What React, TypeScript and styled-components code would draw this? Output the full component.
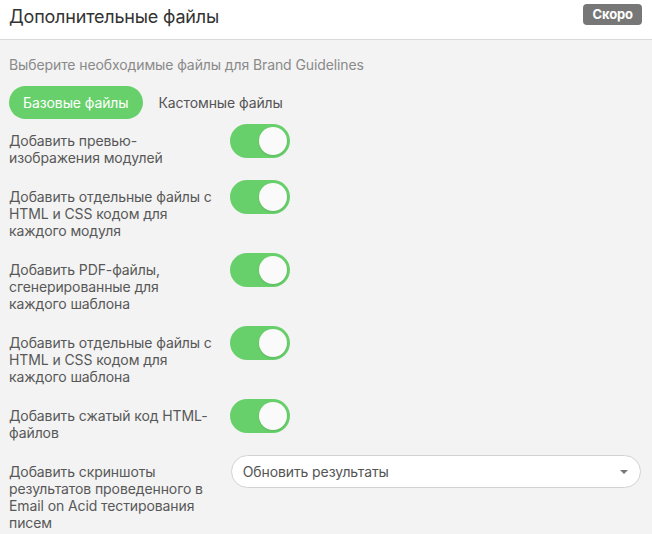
import styled, { createGlobalStyle } from "styled-components";
import { useState } from "react";

const GlobalStyle = createGlobalStyle`
  html, body {
    margin: 0;
    padding: 0;
    background: #f3f3f3;
  }
  * { box-sizing: border-box; }
`;

const options = [
    "Добавить превью-изображения модулей",
    "Добавить отдельные файлы с HTML и CSS кодом для каждого модуля",
    "Добавить PDF-файлы, сгенерированные для каждого шаблона",
    "Добавить отдельные файлы с HTML и CSS кодом для каждого шаблона",
    "Добавить сжатый код HTML-файлов",
];

function App() {
    const [tab, setTab] = useState<number>(0);
    const [checked, setChecked] = useState<boolean[]>(options.map(() => true));

    return (
        <>
        <GlobalStyle />
        <Panel>
            <Header>
                <Title>Дополнительные файлы</Title>
                <Badge>Скоро</Badge>
            </Header>
            <Body>
                <Subtitle>Выберите необходимые файлы для Brand Guidelines</Subtitle>
                <Tabs>
                    <Tab active={tab === 0} onClick={() => setTab(0)}>Базовые файлы</Tab>
                    <Tab active={tab === 1} onClick={() => setTab(1)}>Кастомные файлы</Tab>
                </Tabs>
                {
                    options.map((label, index) => (
                        <Row key={index}>
                            <Label>{label}</Label>
                            <Toggle
                                on={checked[index]}
                                onClick={() => setChecked(checked.map((c, i) => i === index ? !c : c))}
                            >
                                <Knob />
                            </Toggle>
                        </Row>
                    ))
                }
                <Row>
                    <Label>Добавить скриншоты результатов проведенного в Email on Acid тестирования писем</Label>
                    <Select>
                        <span>Обновить результаты</span>
                        <Caret />
                    </Select>
                </Row>
            </Body>
        </Panel>
        </>
    )
}

const Panel = styled.div`
width: 652px;
min-height: 534px;
background: #f3f3f3;
font-family: Inter, "Liberation Sans", sans-serif;
letter-spacing: -0.1px;
`

const Header = styled.div`
height: 40px;
padding: 0 10px 6px 9px;
background: #ffffff;
border-bottom: 1px solid #d9d9d9;
display: flex;
align-items: center;
justify-content: space-between;
`

const Title = styled.h1`
margin: 0;
font-size: 18px;
line-height: 22px;
font-weight: 400;
letter-spacing: -0.2px;
color: #333333;
`

const Badge = styled.span`
height: 21px;
margin-bottom: 4px;
padding: 0 9px;
border-radius: 4px;
background: #777777;
color: #ffffff;
font-size: 13px;
font-weight: 700;
line-height: 21px;
`

const Body = styled.div`
padding: 16px 11px 0 9px;
`

const Subtitle = styled.p`
margin: 0 0 13px 0;
font-size: 14px;
line-height: 17px;
color: #8a8a8a;
`

const Tabs = styled.div`
display: flex;
align-items: center;
gap: 2px;
margin-bottom: 5px;
`

const Tab = styled.button<{ active: boolean }>`
height: 33px;
padding: 0 14px;
border: none;
border-radius: 17px;
background: ${(p) => (p.active ? "#67d06b" : "transparent")};
color: ${(p) => (p.active ? "#ffffff" : "#555555")};
font-family: Inter, "Liberation Sans", sans-serif;
font-size: 14px;
letter-spacing: -0.1px;
cursor: pointer;
`

const Row = styled.div`
display: flex;
align-items: flex-start;
margin-bottom: 14px;
`

const Label = styled.div`
width: 221px;
padding: 8px 17px 0 0;
font-size: 14px;
line-height: 17px;
color: #585858;
`

const Toggle = styled.div<{ on: boolean }>`
width: 60px;
height: 34px;
border-radius: 17px;
padding: 3px;
background: ${(p) => (p.on ? "#67d06b" : "#cccccc")};
display: flex;
justify-content: ${(p) => (p.on ? "flex-end" : "flex-start")};
cursor: pointer;
`

const Knob = styled.div`
width: 28px;
height: 28px;
border-radius: 50%;
background: #fafafa;
box-shadow: 0 1px 2px rgba(0, 0, 0, 0.12);
`

const Select = styled.div`
width: 411px;
height: 33px;
margin-left: 1px;
padding: 0 12px 0 11px;
border: 1px solid #d2d2d2;
border-radius: 17px;
background: #ffffff;
display: flex;
align-items: center;
justify-content: space-between;
font-size: 14px;
color: #555555;
`

const Caret = styled.span`
width: 0;
height: 0;
border-left: 4px solid transparent;
border-right: 4px solid transparent;
border-top: 4px solid #777777;
`

export default App;
